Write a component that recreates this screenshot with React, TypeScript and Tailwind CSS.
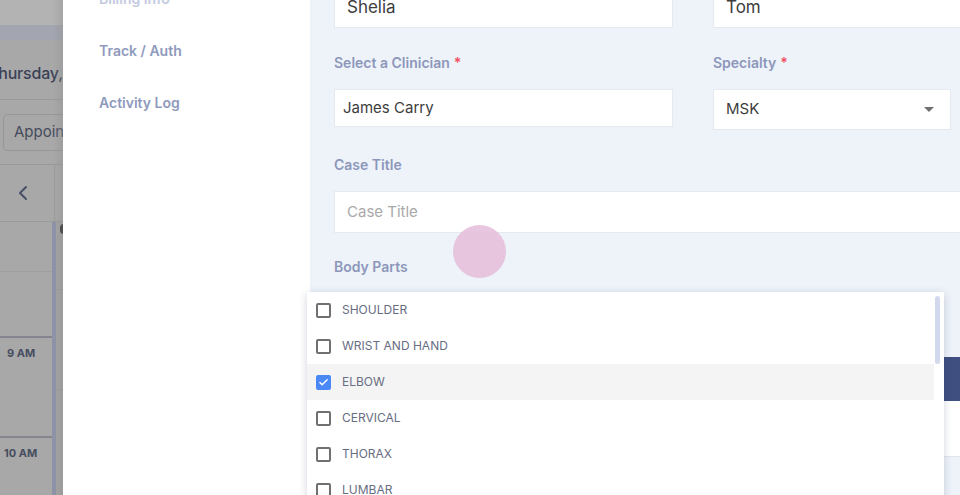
import { Check } from "lucide-react";

const bodyParts = [
  { name: "SHOULDER", checked: false },
  { name: "WRIST AND HAND", checked: false },
  { name: "ELBOW", checked: true },
  { name: "CERVICAL", checked: false },
  { name: "THORAX", checked: false },
  { name: "LUMBAR", checked: false },
];

function CalendarStrip() {
  return (
    <div className="relative w-[63px] shrink-0 overflow-hidden bg-[#a8a8a8]">
      <div className="h-[25px] bg-[#b3b3b3]" />
      <div className="h-[15px] bg-[#a3a6b0]" />
      <div className="flex h-[60px] items-center border-b border-[#9a9a9a] pt-[6px]">
        <span className="-ml-[12px] whitespace-nowrap text-[16px] font-medium tracking-[-0.2px] text-[#3b4156]">
          Thursday,
        </span>
      </div>
      <div className="flex h-[65px] items-center border-b border-[#9a9a9a] pl-[3px]">
        <div className="flex h-[37px] items-center whitespace-nowrap rounded-l-[4px] border border-[#969696] pl-[10px] text-[15px] text-[#454b5c]">
          Appointments
        </div>
      </div>
      <div className="flex h-[57px] border-b border-[#9a9a9a]">
        <div className="flex w-[55px] items-center justify-center border-r border-[#9a9a9a] pr-[8px]">
          <svg width="10" height="16" viewBox="0 0 10 16" fill="none">
            <path d="M8 2 2 8l6 6" stroke="#4a5068" strokeWidth="2" strokeLinecap="round" strokeLinejoin="round" />
          </svg>
        </div>
      </div>
      <div className="flex">
        <div className="w-[52px]">
          <div className="h-[50px] border-b border-[#9e9e9e]" />
          <div className="h-[66px] border-b-2 border-[#85858f]" />
          <div className="h-[100px] border-b-2 border-[#85858f] pl-[7px] pt-[7px] text-[11px] font-bold text-[#474d60]">
            9 AM
          </div>
          <div className="h-[100px] pl-[4px] pt-[7px] text-[11px] font-bold text-[#474d60]">10 AM</div>
        </div>
        <div className="w-[4px] bg-[#8d92a8]" />
        <div className="relative flex-1 bg-[#a3a3a3]">
          <div className="absolute left-[4px] top-[2px] h-[10px] w-[4px] rounded-l-full bg-[#2c2c2c]" />
          <div className="h-[68px] border-b border-[#9c9c9c]" />
          <div className="h-[100px] border-b border-[#9c9c9c]" />
        </div>
      </div>
      <div className="pointer-events-none absolute inset-y-0 right-0 w-[10px] bg-gradient-to-r from-transparent to-[#8f8f8f]/40" />
    </div>
  );
}

function Sidebar() {
  return (
    <div className="w-[247px] shrink-0 bg-white pl-[36px]">
      <div className="-mt-[12px] flex flex-col gap-[30px] text-[14px] font-semibold leading-[22px]">
        <span className="text-[#c3cadf]">Billing Info</span>
        <span className="text-[#8f9abd]">Track / Auth</span>
        <span className="text-[#8f9abd]">Activity Log</span>
      </div>
    </div>
  );
}

function Label({ text, required }: { text: string; required?: boolean }) {
  return (
    <p className="text-[14px] font-semibold leading-[20px] text-[#8d97ba]">
      {text}
      {required && <span className="ml-[4px] text-[#ef4f5f]">*</span>}
    </p>
  );
}

function BodyPartsDropdown() {
  return (
    <div className="absolute left-[307px] top-[292px] h-[220px] w-[637px] bg-white shadow-[0_2px_8px_rgba(40,50,80,0.22)]">
      <div className="flex flex-col pr-[10px]">
        {bodyParts.map((part) => (
          <div
            key={part.name}
            className={`flex h-[36px] items-center gap-[11px] pl-[9px] ${part.checked ? "bg-[#f4f4f4]" : ""}`}
          >
            {part.checked ? (
              <span className="flex h-[15px] w-[15px] items-center justify-center rounded-[2px] bg-[#4a88f6]">
                <Check size={11} strokeWidth={3} color="#fff" />
              </span>
            ) : (
              <span className="h-[15px] w-[15px] rounded-[2px] border-2 border-[#707070]" />
            )}
            <span className="text-[12px] leading-none text-[#676d82]">{part.name}</span>
          </div>
        ))}
      </div>
      <div className="absolute right-[4px] top-[4px] h-[68px] w-[5px] rounded-full bg-[#d3d9ec]" />
    </div>
  );
}

export default function App() {
  return (
    <div
      className="relative flex h-[495px] w-[960px] overflow-hidden bg-[#eef3fa]"
      style={{ fontFamily: "Inter, 'Noto Sans', sans-serif" }}
    >
      <CalendarStrip />
      <Sidebar />

      <div className="flex-1 overflow-hidden pl-[24px]">
        <div className="-mt-[12px] grid grid-cols-[339px_1fr] gap-x-[40px]">
          <div className="flex h-[40px] items-center border border-[#e6e9ef] bg-white pl-[12px] text-[17px] text-[#3d3d3d]">
            Shelia
          </div>
          <div className="-mr-[10px] flex h-[40px] items-center border border-[#e6e9ef] bg-white pl-[12px] text-[17px] text-[#3d3d3d]">
            Tom
          </div>

          <div className="mt-[25px]">
            <Label text="Select a Clinician" required />
          </div>
          <div className="mt-[25px]">
            <Label text="Specialty" required />
          </div>

          <div className="mt-[16px] flex h-[38px] items-center border border-[#e6e9ef] bg-white pl-[8px] text-[15px] text-[#3d3d3d]">
            James Carry
          </div>
          <div className="mt-[16px] mr-[9px] flex h-[41px] items-center justify-between border border-[#e6e9ef] bg-white pl-[12px] pr-[16px] text-[15px] text-[#3d3d3d]">
            MSK
            <svg width="10" height="5" viewBox="0 0 10 5">
              <path d="M0 0h10L5 5z" fill="#707070" />
            </svg>
          </div>
        </div>

        <div className="mt-[25px]">
          <Label text="Case Title" />
        </div>
        <div className="-mr-[10px] mt-[16px] flex h-[42px] items-center border border-[#e6e9ef] bg-white pl-[12px] text-[15px] text-[#a9a9a9]">
          Case Title
        </div>

        <div className="mt-[24px]">
          <Label text="Body Parts" />
        </div>
        <div className="mt-[80px] h-[44px] bg-[#3f5080]" />
        <div className="h-[56px] border-b border-[#e3e6ec] bg-white" />
      </div>

      <BodyPartsDropdown />
      <div className="pointer-events-none absolute left-[453px] top-[225px] h-[53px] w-[53px] rounded-full bg-[#e5bcd9]/85" />
    </div>
  );
}
